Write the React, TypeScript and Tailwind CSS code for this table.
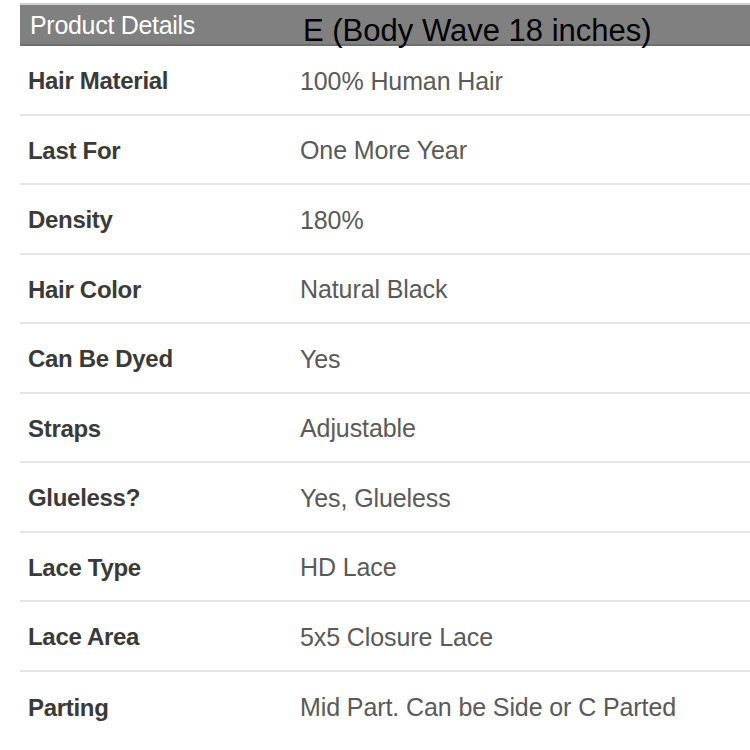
const rows = [
  ["Hair Material", "100% Human Hair"],
  ["Last For", "One More Year"],
  ["Density", "180%"],
  ["Hair Color", "Natural Black"],
  ["Can Be Dyed", "Yes"],
  ["Straps", "Adjustable"],
  ["Glueless?", "Yes, Glueless"],
  ["Lace Type", "HD Lace"],
  ["Lace Area", "5x5 Closure Lace"],
  ["Parting", "Mid Part. Can be Side or C Parted"],
];

function App() {
  return (
    <div className="w-[750px] h-[750px] bg-white pt-[3px] pl-[20px] font-['Liberation_Sans',sans-serif] overflow-hidden">
      <div className="relative h-[43px] bg-[#808080] border-t-2 border-[#d0d0d0] border-b-2 border-b-[#6e6e6e]">
        <span className="absolute left-[10px] top-[5px] text-[25px] leading-[30px] text-white tracking-[-0.3px]">
          Product Details
        </span>
        <span className="absolute left-[283px] top-[7px] text-[31px] leading-[38px] text-black whitespace-nowrap">
          E (Body Wave 18 inches)
        </span>
      </div>
      {rows.map(([label, value]) => (
        <div
          key={label}
          className="flex items-center h-[69.5px] pt-[3px] border-b-2 border-[#e6e6e6] last:border-b-0"
        >
          <div className="w-[280px] pl-[8px] text-[24px] font-bold text-[#3a3a3a] tracking-[-0.3px]">
            {label}
          </div>
          <div className="text-[25px] text-[#5a5a5a] tracking-[-0.1px]">{value}</div>
        </div>
      ))}
    </div>
  );
}

export default App;
